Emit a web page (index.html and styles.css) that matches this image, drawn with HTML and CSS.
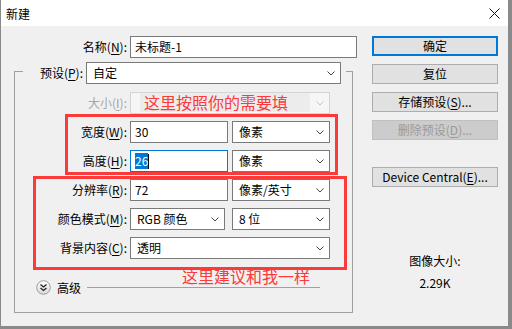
FILE: index.html
```html
<!DOCTYPE html>
<html lang="zh-CN">
<head>
  <meta charset="UTF-8">
  <title>新建</title>
  <link rel="stylesheet" href="styles.css">
</head>
<body>
  <div class="window">
    <div class="titlebar">
      <span class="title">新建</span>
      <svg class="close" width="11" height="11" viewBox="0 0 11 11">
        <path d="M0.5 0.5L10.5 10.5M10.5 0.5L0.5 10.5" stroke="#111" stroke-width="1" fill="none"/>
      </svg>
    </div>
    <div class="content">
      <div class="form">
        <div class="row name-row">
          <label class="lbl">名称(<u>N</u>):</label>
          <div class="field name-field">未标题-1</div>
        </div>
        <div class="group">
          <div class="group-head">
            <label class="lbl head-lbl">预设(<u>P</u>):</label>
            <div class="select preset">
              <span>自定</span>
              <svg class="chev" width="8" height="5" viewBox="0 0 8 5"><path d="M0.5 0.5L4 4L7.5 0.5" stroke="#444" fill="none"/></svg>
            </div>
          </div>
          <div class="rows">
            <div class="row">
              <label class="lbl off">大小(<u>I</u>):</label>
              <div class="ctrls">
                <div class="select full off">
                  <span></span>
                  <svg class="chev" width="8" height="5" viewBox="0 0 8 5"><path d="M0.5 0.5L4 4L7.5 0.5" stroke="#c4c4c4" fill="none"/></svg>
                </div>
              </div>
            </div>
            <div class="row">
              <label class="lbl">宽度(<u>W</u>):</label>
              <div class="ctrls">
                <div class="field half">30</div>
                <div class="select half">
                  <span>像素</span>
                  <svg class="chev" width="8" height="5" viewBox="0 0 8 5"><path d="M0.5 0.5L4 4L7.5 0.5" stroke="#444" fill="none"/></svg>
                </div>
              </div>
            </div>
            <div class="row">
              <label class="lbl">高度(<u>H</u>):</label>
              <div class="ctrls">
                <div class="field half focus"><span class="sel">26</span><span class="caret"></span></div>
                <div class="select half">
                  <span>像素</span>
                  <svg class="chev" width="8" height="5" viewBox="0 0 8 5"><path d="M0.5 0.5L4 4L7.5 0.5" stroke="#444" fill="none"/></svg>
                </div>
              </div>
            </div>
            <div class="row">
              <label class="lbl">分辨率(<u>R</u>):</label>
              <div class="ctrls">
                <div class="field half">72</div>
                <div class="select half">
                  <span>像素/英寸</span>
                  <svg class="chev" width="8" height="5" viewBox="0 0 8 5"><path d="M0.5 0.5L4 4L7.5 0.5" stroke="#444" fill="none"/></svg>
                </div>
              </div>
            </div>
            <div class="row">
              <label class="lbl">颜色模式(<u>M</u>):</label>
              <div class="ctrls">
                <div class="select mode">
                  <span>RGB 颜色</span>
                  <svg class="chev" width="8" height="5" viewBox="0 0 8 5"><path d="M0.5 0.5L4 4L7.5 0.5" stroke="#444" fill="none"/></svg>
                </div>
                <div class="select half">
                  <span>8 位</span>
                  <svg class="chev" width="8" height="5" viewBox="0 0 8 5"><path d="M0.5 0.5L4 4L7.5 0.5" stroke="#444" fill="none"/></svg>
                </div>
              </div>
            </div>
            <div class="row">
              <label class="lbl">背景内容(<u>C</u>):</label>
              <div class="ctrls">
                <div class="select full">
                  <span>透明</span>
                  <svg class="chev" width="8" height="5" viewBox="0 0 8 5"><path d="M0.5 0.5L4 4L7.5 0.5" stroke="#444" fill="none"/></svg>
                </div>
              </div>
            </div>
          </div>
          <div class="advanced">
            <svg class="toggle" width="15" height="15" viewBox="0 0 15 15">
              <defs>
                <linearGradient id="knob" x1="0" y1="0" x2="0" y2="1">
                  <stop offset="0" stop-color="#ffffff"/>
                  <stop offset="1" stop-color="#d8d8d8"/>
                </linearGradient>
              </defs>
              <circle cx="7.5" cy="7.5" r="6.8" fill="url(#knob)" stroke="#9c9c9c"/>
              <path d="M4.5 4.5L7.5 7L10.5 4.5M4.5 8L7.5 10.5L10.5 8" stroke="#222" stroke-width="1.3" fill="none"/>
            </svg>
            <span class="adv-text">高级</span>
            <span class="rule"></span>
          </div>
        </div>
      </div>
      <div class="side">
        <div class="btn primary">确定</div>
        <div class="btn">复位</div>
        <div class="btn">存储预设(<u>S</u>)...</div>
        <div class="btn disabled">删除预设(<u>D</u>)...</div>
        <div class="btn device">Device Central(<u>E</u>)...</div>
        <div class="size-info">
          <div>图像大小:</div>
          <div class="size-value">2.29K</div>
        </div>
      </div>
    </div>
    <div class="note note-top">这里按照你的需要填</div>
    <div class="mark mark-size"></div>
    <div class="mark mark-res"></div>
    <div class="note note-bottom">这里建议和我一样</div>
  </div>
</body>
</html>
```
FILE: styles.css
```css
/* window frame */
body {
  margin: 0;
  background-color: #8a8a8a;
  font-family: "Noto Sans CJK SC", "Microsoft YaHei", sans-serif;
  font-size: 12px;
  color: #000;
}
.window {
  position: relative;
  margin-left: 1px;
  width: 507px;
  height: 326px;
  background-color: #f0f0f0;
  overflow: hidden;
}
u {
  text-decoration: underline;
  text-underline-offset: 2px;
}

/* title bar */
.titlebar {
  height: 26px;
  background-color: #fff;
  display: flex;
  align-items: center;
  justify-content: space-between;
  padding: 0 8px 0 5px;
}
.title {
  line-height: 26px;
  padding-top: 1px;
}

/* body */
.content {
  display: flex;
  padding-top: 10px;
}
.form {
  width: 360px;
}
.row {
  display: flex;
  align-items: center;
  gap: 3px;
  height: 22px;
}
.lbl {
  width: 112px;
  text-align: right;
  line-height: 20px;
  white-space: nowrap;
}
.name-row .lbl {
  width: 126px;
}
.lbl.off {
  color: #a6a6a6;
}

/* inputs and dropdowns */
.field, .select {
  box-sizing: border-box;
  height: 22px;
  border: 1px solid #7a7a7a;
  background-color: #fff;
  line-height: 20px;
  white-space: nowrap;
}
.field {
  padding: 0 4px;
}
.select {
  display: flex;
  align-items: center;
  justify-content: space-between;
  padding: 0 5px 0 6px;
}
.select.off {
  border-color: #d4d4d4;
  background-color: #f6f6f6;
}
.chev {
  flex: none;
}
.name-field {
  width: 227px;
}
.ctrls {
  display: flex;
  justify-content: space-between;
  width: 200px;
}
.full {
  width: 200px;
}
.half {
  width: 98px;
}
.mode {
  width: 95px;
}
.field.focus {
  border-color: #0078d7;
  display: flex;
  align-items: center;
}
.sel {
  background-color: #0078d7;
  color: #fff;
  line-height: 16px;
}
.caret {
  width: 1px;
  height: 15px;
  background-color: #000;
}

/* group box */
.group {
  box-sizing: border-box;
  width: 339px;
  margin: 13px 0 0 13px;
  border: 1px solid #a0a0a0;
  padding-bottom: 17px;
}
.group-head {
  display: flex;
  align-items: center;
  gap: 3px;
  width: 323px;
  margin: -10px 0 0 8px;
  background-color: #f0f0f0;
}
.head-lbl {
  width: 60px;
}
.preset {
  width: 255px;
}
.rows {
  display: flex;
  flex-direction: column;
  gap: 7px;
  margin-top: 8px;
}
.advanced {
  display: flex;
  align-items: center;
  height: 15px;
  margin: 21px 0 0 21px;
}
.adv-text {
  margin-left: 6px;
  line-height: 15px;
}
.rule {
  flex: 0 0 233px;
  height: 0;
  margin-left: 6px;
  border-top: 1px solid #a0a0a0;
}

/* buttons column */
.side {
  display: flex;
  flex-direction: column;
  gap: 8px;
  width: 126px;
  margin-left: 11px;
}
.btn {
  box-sizing: border-box;
  height: 20px;
  border: 1px solid #adadad;
  background-color: #e1e1e1;
  text-align: center;
  line-height: 18px;
  white-space: nowrap;
}
.btn.primary {
  border: 2px solid #0078d7;
  line-height: 16px;
}
.btn.disabled {
  border-color: #bfbfbf;
  background-color: #cccccc;
  color: #9a9a9a;
}
.btn.device {
  margin-top: 19px;
}
.size-info {
  margin-top: 58px;
  text-align: center;
  line-height: 16px;
}
.size-value {
  margin-top: 6px;
}

/* red annotations drawn over the dialog */
.mark {
  position: absolute;
  box-sizing: border-box;
  border: 3px solid #fb3a3a;
}
.mark-size {
  left: 64px;
  top: 114px;
  width: 273px;
  height: 61px;
}
.mark-res {
  left: 32px;
  top: 176px;
  width: 314px;
  height: 94px;
}
.note {
  position: absolute;
  color: #fb3a3a;
  font-size: 16px;
  line-height: 19px;
  white-space: nowrap;
}
.note-top {
  left: 139px;
  top: 93px;
  width: 166px;
  padding-left: 4px;
  background-color: #ececec;
}
.note-bottom {
  left: 181px;
  top: 267px;
}
```
